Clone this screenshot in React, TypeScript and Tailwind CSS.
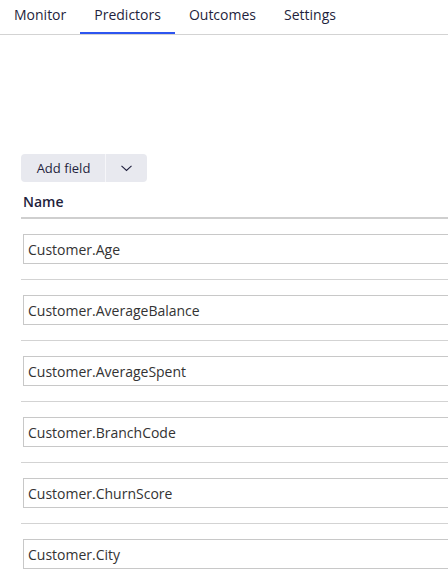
import React from "react";

const tabs = ["Monitor", "Predictors", "Outcomes", "Settings"];
const rows = [
  "Customer.Age",
  "Customer.AverageBalance",
  "Customer.AverageSpent",
  "Customer.BranchCode",
  "Customer.ChurnScore",
  "Customer.City",
];

export default function App() {
  return (
    <div className="w-[448px] h-[579px] overflow-hidden bg-white font-['Open_Sans',sans-serif] text-[14px] text-[#1f1f3d]">
      <div className="flex h-[35px] border-b border-[#d3d3d3]">
        {tabs.map((t) => (
          <div key={t} className="relative px-[14px] pt-[5px] leading-[20px]">
            {t}
            {t === "Predictors" && (
              <div className="absolute left-0 right-0 bottom-0 h-[2px] bg-[#2d55f0]" />
            )}
          </div>
        ))}
      </div>
      <div className="w-[520px] pl-[21px] pt-[119px]">
        <div className="flex h-[28px] w-[126px] rounded-[4px] bg-[#e8e9ef]">
          <div className="flex w-[84px] items-center justify-center pl-[1px] text-[13px] leading-[20px] text-[#1f1f3d]">
            Add field
          </div>
          <div className="w-px bg-[#f6f6f9]" />
          <div className="flex flex-1 items-center justify-center">
            <svg width="11" height="7" viewBox="0 0 11 7" fill="none">
              <path d="M0.5 0.8 L5.5 5.5 L10.5 0.8" stroke="#1f1f3d" strokeWidth="1.1" />
            </svg>
          </div>
        </div>
        <div className="h-[37px] border-b-2 border-[#cfcfcf] pl-[2px] pt-[10px] font-semibold leading-[20px]">
          Name
        </div>
        {rows.map((r) => (
          <div key={r} className="border-b border-[#d3d3d3] py-[15px] pl-[2px]">
            <div className="flex h-[30px] items-center border border-[#c8c8c8] pl-[4px] pt-[1px] text-[#333333] leading-[20px]">
              {r}
            </div>
          </div>
        ))}
      </div>
    </div>
  );
}
